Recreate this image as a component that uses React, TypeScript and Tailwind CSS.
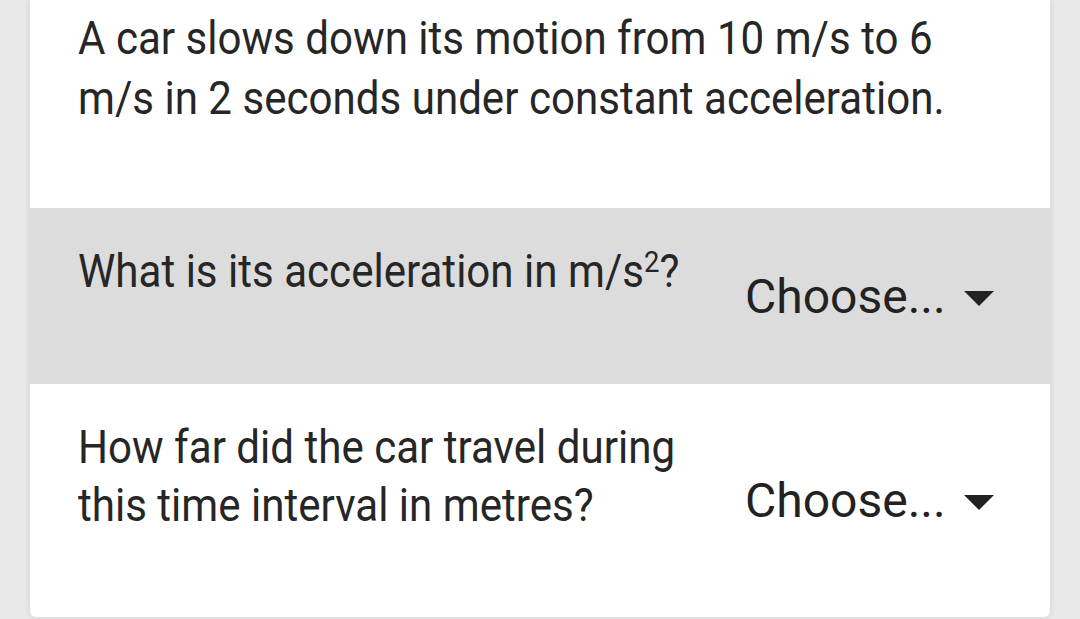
import { ReactNode } from 'react'

function Select() {
  return (
    <div className="flex items-center gap-[18px] text-[48px] leading-[60px] text-[#222]">
      <span>Choose...</span>
      <svg width="30" height="15" viewBox="0 0 30 15" className="mt-[2px]">
        <path d="M0 0 L30 0 L15 15 Z" fill="#222" />
      </svg>
    </div>
  )
}

// the question copy is rendered narrow, so squeeze it horizontally
function Copy({ children, width, lh }: { children: ReactNode; width: string; lh: string }) {
  return (
    <p className={`${width} ${lh} text-[46px] text-[#262626] origin-left scale-x-[0.915]`}>{children}</p>
  )
}

function Row({
  question,
  gray,
  selectPad,
  children,
}: {
  question: ReactNode
  gray?: boolean
  selectPad: string
  children?: ReactNode
}) {
  return (
    <div className={`flex pl-[48px] pt-[34px] ${gray ? 'bg-[#dcdcdc] h-[176px]' : 'h-[233px]'}`}>
      <div className="w-[667px] shrink-0">
        <Copy width="w-[700px]" lh="leading-[58px]">
          {question}
        </Copy>
      </div>
      <div className={selectPad}>{children}</div>
    </div>
  )
}

export default function App() {
  return (
    <div className="w-[1080px] h-[619px] overflow-hidden bg-[#e9e9e9] font-['Roboto',sans-serif] text-[#222]">
      <div className="ml-[30px] w-[1020px] h-[617px] bg-white rounded-b-[6px] shadow-[0_0_6px_rgba(0,0,0,0.12)] flex flex-col">
        <div className="pl-[48px] pt-[8px] h-[208px] overflow-hidden">
          <Copy width="w-[960px]" lh="leading-[60px]">
            A car slows down its motion from 10 m/s to 6 m/s in 2 seconds under constant acceleration.
          </Copy>
        </div>
        <Row
          gray
          selectPad="pt-[25px]"
          question={
            <>
              What is its acceleration in m/s<sup className="text-[30px] -top-[15px]">2</sup>?
            </>
          }
        >
          <Select />
        </Row>
        <Row selectPad="pt-[53px]" question="How far did the car travel during this time interval in metres?">
          <Select />
        </Row>
      </div>
    </div>
  )
}
